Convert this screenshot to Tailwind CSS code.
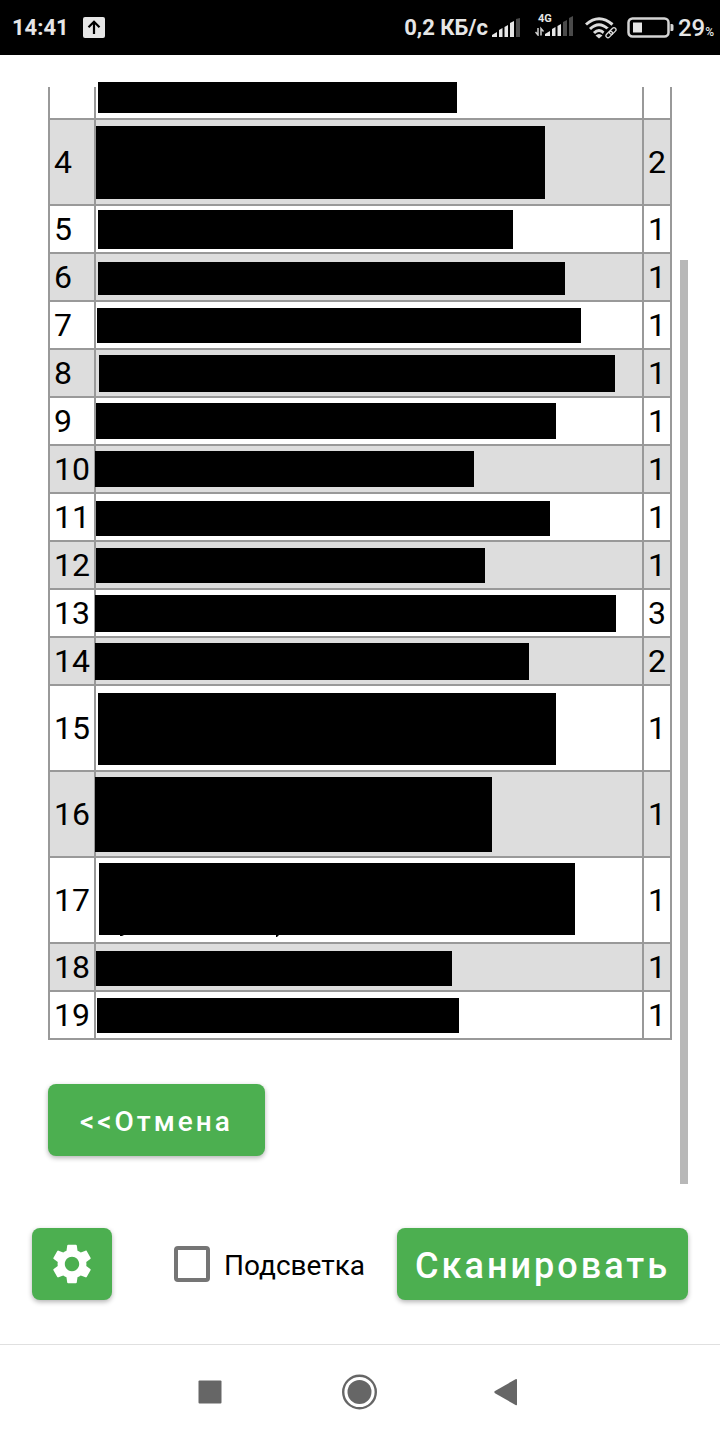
<!DOCTYPE html>
<html lang="ru">
<head>
<meta charset="utf-8">
<meta name="viewport" content="width=device-width, initial-scale=1">
<title>Сканирование</title>
<script src="https://cdn.jsdelivr.net/npm/@tailwindcss/browser@4"></script>
</head>
<body class="flex min-h-screen flex-col bg-white font-[Roboto,sans-serif] text-black">

<header class="flex h-[55px] shrink-0 items-center bg-black pr-[6px] pl-3 text-[22px] font-bold text-[#e6e6e6]">
  <span>14:41</span>
  <svg class="ml-[14px] h-[22px] w-[22px]" viewBox="0 0 22 22" aria-hidden="true">
    <rect width="22" height="21" rx="2" fill="#e6e6e6"/>
    <path d="M11 17V5M5.500 10.200 11 4.800l5.500 5.400" fill="none" stroke="#000" stroke-width="2.200"/>
  </svg>
  <span class="ml-auto">0,2 КБ/с</span>
  <svg class="ml-1 h-5 w-7" viewBox="0 0 28 20" aria-hidden="true">
    <g fill="#e6e6e6"><path d="M0 19v-2l5-3v5z"/><path d="M7 19v-7l3.500-2v9z"/><path d="M12.500 19V9L16 7v12z"/><path d="M18 19V5l4-2v16z"/></g>
    <path d="M24 19V1l4-1v19z" fill="#4a4a4a"/>
  </svg>
  <div class="ml-[15px] flex w-[38px] flex-col pb-[5px]">
    <span class="pl-[3px] text-[11px] leading-[10px]">4G</span>
    <svg class="-mt-2 h-5 w-[38px]" viewBox="0 0 38 20" aria-hidden="true">
      <path d="M3 12v7L.5 16M6 19.500v-7l2.500 3" fill="none" stroke="#cfcfcf" stroke-width="1.500"/>
      <g fill="#e6e6e6"><path d="M10 20v-2l5-3v5z"/><path d="M17 20v-7l3.500-2v9z"/><path d="M22.500 20V10L26 8v12z"/></g>
      <path d="M28 20V6l4-2v16zM34 20V2l4-2v20z" fill="#4a4a4a"/>
    </svg>
  </div>
  <svg class="ml-3 h-[22px] w-8" viewBox="0 0 32 22" aria-hidden="true">
    <g fill="none" stroke="#dcdcdc" stroke-width="3"><path d="M1 7.500Q14-4 27.500 7.500"/><path d="M5 12Q14 3.500 23 12"/><path d="M9 16Q14 11 19 16"/></g>
    <path d="M10.500 18.500Q14 15.500 17.500 18.500L14 21.500z" fill="#dcdcdc"/>
    <g fill="none" stroke="#000" stroke-width="4"><rect x="20" y="14" width="7" height="4" rx="2" transform="rotate(-45 23.500 16)"/></g>
    <g fill="none" stroke="#dcdcdc" stroke-width="1.300"><rect x="20.500" y="15.500" width="7.500" height="4" rx="2" transform="rotate(-45 24.200 17.500)"/><rect x="24" y="12" width="7.500" height="4" rx="2" transform="rotate(-45 27.700 14)"/></g>
  </svg>
  <svg class="ml-[10px] h-[22px] w-[47px]" viewBox="0 0 47 22" aria-hidden="true">
    <rect x="1.500" y="1.500" width="40" height="18" rx="4" fill="none" stroke="#d4d4d4" stroke-width="2.500"/>
    <rect x="6" y="5.500" width="9" height="10" fill="#e6e6e6"/>
    <path d="M43.500 7h1.500a1.500 1.500 0 0 1 1.500 1.500v4a1.500 1.500 0 0 1-1.500 1.500h-1.500z" fill="#d4d4d4"/>
  </svg>
  <span class="ml-1 text-[24px] font-medium">29<span class="text-[12px]">%</span></span>
</header>

<main class="relative mx-8 mt-8 px-4 pb-7">
  <table class="w-full table-fixed border-collapse text-[32px] leading-9 [&_td]:border-2 [&_td]:border-[#999] [&_td]:p-0 [&_td:first-child]:pl-1 [&_td:last-child]:pl-1 [&_tr:nth-child(even)]:bg-[#ddd] [&_tr:first-child_td]:border-t-0 [&_td:nth-child(2)]:align-top">
    <colgroup><col class="w-[46px]"><col><col class="w-7"></colgroup>
    <tbody>
      <tr class="h-8"><td></td><td><div class="-mt-[5px] ml-[2px] h-[31px] w-[359px] bg-black"></div></td><td></td></tr>
      <tr class="h-[86px]"><td>4</td><td><div class="mt-[6px] h-[73px] w-[449px] bg-black"></div></td><td>2</td></tr>
      <tr class="h-12"><td>5</td><td><div class="mt-[4px] ml-[2px] h-[39px] w-[415px] bg-black"></div></td><td>1</td></tr>
      <tr class="h-12"><td>6</td><td><div class="mt-[8px] ml-[2px] h-[33px] w-[467px] bg-black"></div></td><td>1</td></tr>
      <tr class="h-12"><td>7</td><td><div class="mt-[6px] ml-[1px] h-[35px] w-[484px] bg-black"></div></td><td>1</td></tr>
      <tr class="h-12"><td>8</td><td><div class="mt-[5px] ml-[3px] h-[37px] w-[516px] bg-black"></div></td><td>1</td></tr>
      <tr class="h-12"><td>9</td><td><div class="mt-[5px] h-[36px] w-[460px] bg-black"></div></td><td>1</td></tr>
      <tr class="h-12"><td>10</td><td><div class="relative mt-[5px] -ml-px h-[36px] w-[379px] bg-black"></div></td><td>1</td></tr>
      <tr class="h-12"><td>11</td><td><div class="mt-[7px] h-[35px] w-[454px] bg-black"></div></td><td>1</td></tr>
      <tr class="h-12"><td>12</td><td><div class="mt-[6px] h-[35px] w-[389px] bg-black"></div></td><td>1</td></tr>
      <tr class="h-12"><td>13</td><td><div class="relative mt-[5px] -ml-px h-[37px] w-[521px] bg-black"></div></td><td>3</td></tr>
      <tr class="h-12"><td>14</td><td><div class="relative mt-[5px] -ml-px h-[37px] w-[434px] bg-black"></div></td><td>2</td></tr>
      <tr class="h-[86px]"><td>15</td><td><div class="mt-[7px] ml-[2px] h-[72px] w-[458px] bg-black"></div></td><td>1</td></tr>
      <tr class="h-[86px]"><td>16</td><td><div class="relative mt-[5px] -ml-px h-[75px] w-[397px] bg-black"></div></td><td>1</td></tr>
      <tr class="h-[86px]"><td>17</td><td><div class="mt-[5px] ml-[3px] h-[72px] w-[476px] bg-black"></div><svg class="ml-[3px] block h-[2px] w-[180px]" viewBox="0 0 180 2" aria-hidden="true"><path d="M21 0h4l-2 1h-2zM177 0h3l-2 2h-1z"/></svg></td><td>1</td></tr>
      <tr class="h-12"><td>18</td><td><div class="mt-[7px] h-[35px] w-[356px] bg-black"></div></td><td>1</td></tr>
      <tr class="h-12"><td>19</td><td><div class="mt-[6px] ml-[1px] h-[35px] w-[362px] bg-black"></div></td><td>1</td></tr>
    </tbody>
  </table>
  <button type="button" class="mt-11 block h-18 rounded-lg bg-[#4caf50] px-8 pt-1 text-[28px] font-medium tracking-[3px] text-white shadow-[0_2px_5px_rgba(0,0,0,0.3)]">&lt;&lt;Отмена</button>
  <div class="absolute right-0 bottom-0 h-[924px] w-2 bg-[#b8b8b8]"></div>
</main>

<section class="mx-8 mt-11 mb-11 flex items-center">
  <button type="button" aria-label="Настройки" class="flex h-18 w-20 items-center justify-center rounded-lg bg-[#4caf50] shadow-[0_2px_5px_rgba(0,0,0,0.3)]">
    <svg class="h-12 w-12" viewBox="0 0 24 24" fill="#fff" aria-hidden="true"><path d="M19.14,12.94c0.04-0.3,0.06-0.61,0.06-0.94c0-0.32-0.02-0.64-0.07-0.94l2.03-1.58c0.18-0.14,0.23-0.41,0.12-0.61l-1.92-3.32c-0.12-0.22-0.37-0.29-0.59-0.22l-2.39,0.96c-0.5-0.38-1.03-0.7-1.62-0.94L14.4,2.81c-0.04-0.24-0.24-0.41-0.48-0.41h-3.84c-0.24,0-0.43,0.17-0.47,0.41L9.25,5.35C8.66,5.59,8.12,5.92,7.63,6.29L5.24,5.33c-0.22-0.08-0.47,0-0.59,0.22L2.74,8.87C2.62,9.08,2.66,9.34,2.86,9.48l2.03,1.58C4.84,11.36,4.8,11.69,4.8,12s0.02,0.64,0.07,0.94l-2.03,1.58c-0.18,0.14-0.23,0.41-0.12,0.61l1.92,3.32c0.12,0.22,0.37,0.29,0.59,0.22l2.39-0.96c0.5,0.38,1.03,0.7,1.62,0.94l0.36,2.54c0.05,0.24,0.24,0.41,0.48,0.41h3.84c0.24,0,0.44-0.17,0.47-0.41l0.36-2.54c0.59-0.24,1.13-0.56,1.62-0.94l2.39,0.96c0.22,0.08,0.47,0,0.59-0.22l1.92-3.32c0.12-0.22,0.07-0.47-0.12-0.61L19.14,12.94z M12,15.6c-1.98,0-3.6-1.62-3.6-3.6s1.62-3.6,3.6-3.6s3.6,1.62,3.6,3.6S13.98,15.6,12,15.6z"/></svg>
  </button>
  <label class="mr-8 ml-auto flex items-center gap-[14px] text-[28px]">
    <input type="checkbox" class="h-9 w-9 appearance-none rounded-[4px] border-4 border-[#757575] checked:bg-[#4caf50]">
    <span class="pt-1">Подсветка</span>
  </label>
  <button type="button" class="h-18 rounded-lg bg-[#4caf50] px-[18px] pt-1 text-[36px] font-medium tracking-[3px] text-white shadow-[0_2px_5px_rgba(0,0,0,0.3)]">Сканировать</button>
</section>

<nav class="mt-auto flex h-24 items-center justify-center gap-[114px] border-t border-[#e0e0e0] pb-[2px]">
  <button type="button" aria-label="Недавние"><svg class="block h-9 w-9" viewBox="0 0 36 36" fill="#666"><rect x="6.500" y="6.500" width="23" height="23" rx="1"/></svg></button>
  <button type="button" aria-label="Домой"><svg class="block h-9 w-9" viewBox="0 0 36 36" fill="#666"><circle cx="17.500" cy="18" r="12"/><circle cx="17.500" cy="18" r="16.300" fill="none" stroke="#666" stroke-width="2.400"/></svg></button>
  <button type="button" aria-label="Назад"><svg class="block h-9 w-9" viewBox="0 0 36 36" fill="#666"><path d="M3 17 23.500 5.300Q25 4.600 25 6v24.500Q25 31.800 23.500 31L3 19.200Q1.500 18 3 17z"/></svg></button>
</nav>
</body>
</html>
